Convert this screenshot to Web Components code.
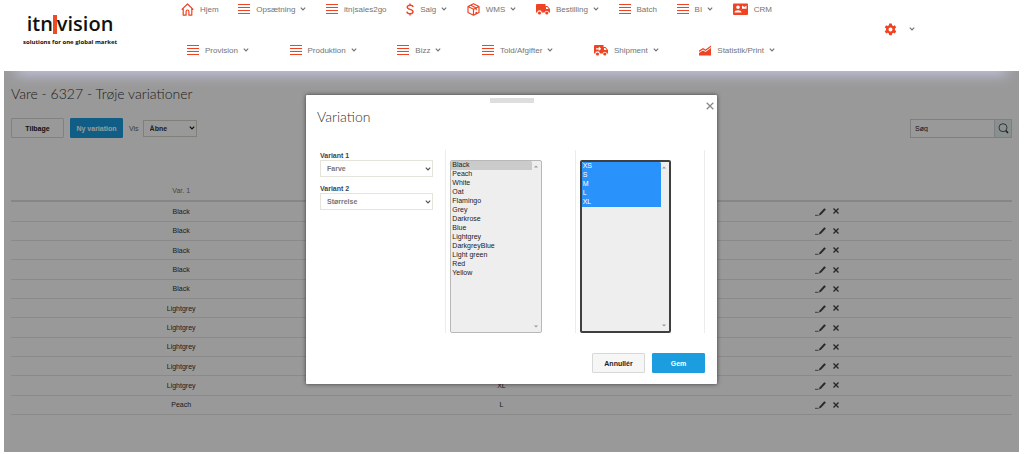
<!DOCTYPE html>
<html lang="da">
<head>
<meta charset="utf-8">
<title>Vare - Trøje variationer</title>
<style>
html { height: 100%; }
body { margin: 0; min-height: 100%; display: flex; flex-direction: column; background: #fff; font-family: "Liberation Sans", Arial, sans-serif; font-size: 7px; color: #333; }
</style>
</head>
<body>
<app-header></app-header>
<variation-page></variation-page>
<script>
const ICONS = {
  menu: [12, 12, '<path d="M0 1.5h12M0 4.5h12M0 7.5h12M0 10.5h12" stroke="currentColor" stroke-width="1.2"/>'],
  home: [13, 13, '<path d="M.7 6.6 6.5 1l5.8 5.6M2.2 5.6v6.6h2.9V8.4a1.4 1.4 0 0 1 2.8 0v3.8h2.9V5.6" fill="none" stroke="currentColor" stroke-width="1.2" stroke-linejoin="round"/>'],
  dollar: [8, 13, '<path d="M7 4C6.800 2.700 5.700 2.200 4 2.200S1.200 3 1.200 4.300C1.200 7 7 5.700 7 8.700c0 1.400-1.200 2.100-3 2.100S1.100 10.100.9 8.700M4 .4v2M4 10.500v2.100" fill="none" stroke="currentColor" stroke-width="1.400"/>'],
  box: [13, 13, '<path d="M6.500.8 12 3.500v6L6.500 12.300 1 9.500v-6zM1 3.500l5.500 2.800L12 3.500M6.500 6.300v6M3.700 2.200l5.500 2.800v2.300M8.200 10.200l2-1" fill="none" stroke="currentColor" stroke-width="1.200" stroke-linejoin="round"/>'],
  truck: [14, 12, '<path d="M1 1h8.500v2H11.500l2.500 3v3.500h-1a2.300 2.300 0 0 0-4.400 0H5.800a2.300 2.300 0 0 0-4.600 0H0V2a1 1 0 0 1 1-1zm9 3v2h2.700L11.200 4z" fill="currentColor" fill-rule="evenodd"/><circle cx="3.500" cy="10" r="1.600" fill="currentColor"/><circle cx="10.800" cy="10" r="1.600" fill="currentColor"/>'],
  ship: [14, 12, '<path d="M1 1h8.500v2H11.500l2.500 3v3.500h-1a2.300 2.300 0 0 0-4.400 0H5.800a2.300 2.300 0 0 0-4.600 0H0V2a1 1 0 0 1 1-1zm9 3v2h2.700L11.200 4zM2 4.200v1.200h2.800V7l2.400-2.300-2.400-2.200v1.700z" fill="currentColor" fill-rule="evenodd"/><circle cx="3.500" cy="10" r="1.600" fill="currentColor"/><circle cx="10.800" cy="10" r="1.600" fill="currentColor"/>'],
  card: [15, 13, '<path d="M1 .5h13a1 1 0 0 1 1 1v9.500a1 1 0 0 1-1 1H1a1 1 0 0 1-1-1V1.500a1 1 0 0 1 1-1zM5 2.500a1.800 1.800 0 1 0 0 3.600 1.800 1.800 0 0 0 0-3.600zM1.500 9.500h7c0-3-7-3-7 0zM9 2.500v3.300h4.500V2.500l-2.200 1.600z" fill="currentColor" fill-rule="evenodd"/>'],
  chart: [12, 12, '<path d="M0 6.500 4 4l2.500 1.500L12 1.500v1.400L6.500 7 4 5.400 0 8zM0 9l4-2.600L6.500 8 12 4v7.500H0z" fill="currentColor"/>'],
  gear: [13, 13, '<path d="M5.200.5h2.600l.3 1.700 1.200.7 1.600-.6 1.300 2.200-1.300 1.100v1.500l1.300 1.100-1.300 2.200-1.600-.6-1.200.7-.3 1.700H5.200l-.3-1.700-1.200-.7-1.600.6L.8 8.200l1.300-1.100V5.600L.8 4.500l1.300-2.200 1.600.6 1.200-.7zM6.500 4.400a2 2 0 1 0 0 4 2 2 0 0 0 0-4z" fill="currentColor" fill-rule="evenodd"/>'],
  chevron: [6, 6, '<path d="M.8 1.700 3 3.900l2.200-2.200" fill="none" stroke="currentColor" stroke-width="1.200"/>'],
  search: [11, 11, '<circle cx="5" cy="4.700" r="4" fill="none" stroke="currentColor" stroke-width=".8"/><path d="m8 7.800 2 2.200" stroke="currentColor" stroke-width="1.600"/>'],
  edit: [12, 9, '<path d="M0 8.300h3.600" stroke="currentColor" stroke-width=".8"/><path d="m4 8.500.5-2L9.300 1.200l1.600 1.400L6 7.800z" fill="currentColor"/>'],
  cross: [6, 6, '<path d="m.5.500 5 5M5.500.500.500 5.500" stroke="currentColor" stroke-width="1.400"/>'],
  close: [8, 8, '<path d="m.7.700 6.600 6.600M7.300.700.700 7.300" stroke="currentColor" stroke-width="1.300"/>'],
  up: [4, 3, '<path d="M0 2.500 2 .5l2 2z" fill="currentColor"/>'],
  down: [4, 3, '<path d="M0 .5 2 2.500l2-2z" fill="currentColor"/>']
};

class ElementBase extends HTMLElement {
  connectedCallback() {
    if (this.shadowRoot) return;
    this.attachShadow({ mode: "open" }).innerHTML = this.render();
  }
}

customElements.define("app-icon", class extends ElementBase {
  render() {
    const [w, h, body] = ICONS[this.getAttribute("name")];
    return `<style>:host{display:inline-block;flex:none}svg{display:block}</style>
      <svg width="${w}" height="${h}" viewBox="0 0 ${w} ${h}" aria-hidden="true">${body}</svg>`;
  }
});

customElements.define("nav-item", class extends ElementBase {
  render() {
    return `<style>
      :host{display:block}
      a{display:flex;align-items:center;height:18px;color:#747474;text-decoration:none;font-size:8px;white-space:nowrap}
      .lead{color:#ee4423;margin-right:6px}
      .more{margin-left:5px}
    </style>
    <a href="#"><app-icon class="lead" name="${this.getAttribute("icon")}"></app-icon><slot></slot>${
      this.hasAttribute("more") ? '<app-icon class="more" name="chevron"></app-icon>' : ""}</a>`;
  }
});

customElements.define("brand-logo", class extends ElementBase {
  render() {
    return `<style>
      :host{display:block;text-align:center;color:#111;font-family:"Open Sans","Noto Sans",sans-serif}
      a{color:inherit;text-decoration:none;display:block}
      .name{display:flex;justify-content:center;align-items:center;font-size:20px;line-height:28px;font-weight:600}
      .bar{width:4px;height:19px;background:#ee4b22}
      .tag{display:block;font-size:6px;line-height:8px;font-weight:700;white-space:nowrap}
    </style>
    <a href="#"><span class="name"><span>itn</span><span class="bar"></span><span>vision</span></span>
    <span class="tag">solutions for one global market</span></a>`;
  }
});

customElements.define("app-header", class extends ElementBase {
  render() {
    return `<style>
      :host{display:block}
      header{display:grid;grid-template-columns:181px minmax(0,1fr) 249px;height:71px;background:#fff}
      brand-logo{justify-self:start;width:94px;margin:10px 0 0 23px}
      nav{display:flex;flex-direction:column;gap:23px}
      .row{display:flex;justify-content:space-between}
      .first{padding-right:3px}
      .second{padding-left:6px}
      button{display:flex;align-items:center;gap:12px;margin:22px 0 0 109px;padding:0;border:0;background:none;color:#747474;height:14px}
      .gear{color:#ee4423}
    </style>
    <header>
      <brand-logo></brand-logo>
      <nav aria-label="Hovedmenu">
        <div class="row first">
          <nav-item icon="home">Hjem</nav-item>
          <nav-item icon="menu" more>Opsætning</nav-item>
          <nav-item icon="menu">itn|sales2go</nav-item>
          <nav-item icon="dollar" more>Salg</nav-item>
          <nav-item icon="box" more>WMS</nav-item>
          <nav-item icon="truck" more>Bestilling</nav-item>
          <nav-item icon="menu">Batch</nav-item>
          <nav-item icon="menu" more>BI</nav-item>
          <nav-item icon="card">CRM</nav-item>
        </div>
        <div class="row second">
          <nav-item icon="menu" more>Provision</nav-item>
          <nav-item icon="menu" more>Produktion</nav-item>
          <nav-item icon="menu" more>Bizz</nav-item>
          <nav-item icon="menu" more>Told/Afgifter</nav-item>
          <nav-item icon="ship" more>Shipment</nav-item>
          <nav-item icon="chart" more>Statistik/Print</nav-item>
        </div>
      </nav>
      <div><button type="button" aria-label="Indstillinger"><app-icon class="gear" name="gear"></app-icon><app-icon name="chevron"></app-icon></button></div>
    </header>`;
  }
});

customElements.define("ui-button", class extends ElementBase {
  render() {
    return `<style>
      :host{display:block}
      button{box-sizing:border-box;width:53px;height:20px;padding:0;border:1px solid #d8d8d8;border-radius:1px;background:#f6f6f6;color:#222;font:bold 7px "Liberation Sans",Arial,sans-serif;white-space:nowrap}
      :host([primary]) button{background:#1b9ddf;border-color:#1b9ddf;color:#fff}
      :host([flat]) button{background:#fff}
    </style><button type="button"><slot></slot></button>`;
  }
});

customElements.define("drop-down", class extends ElementBase {
  render() {
    const label = this.getAttribute("label");
    return `<style>
      :host{display:block}
      .field{display:flex;flex-direction:column}
      label{font-size:7px;line-height:9px;font-weight:bold;color:#3c4650}
      .control{display:grid;align-items:center;color:#555}
      select,app-icon{grid-area:1/1}
      select{appearance:none;box-sizing:border-box;width:100%;height:17px;padding:0 6px;border:1px solid #e4e4da;border-radius:0;background:#fff;color:#777;font:bold 7px "Liberation Sans",Arial,sans-serif}
      app-icon{justify-self:end;margin-right:2px;pointer-events:none}
      :host([inline]) .field{flex-direction:row;align-items:center;gap:4px}
      :host([inline]) label{font-weight:normal;color:#666}
      :host([inline]) .control{width:54px;color:#111}
      :host([inline]) select{color:#333;border-color:#d6d6c8}
    </style>
    <div class="field"><label for="s">${label}</label>
      <div class="control"><select id="s"><option>${this.getAttribute("value")}</option></select><app-icon name="chevron"></app-icon></div>
    </div>`;
  }
});

customElements.define("list-box", class extends ElementBase {
  render() {
    const chosen = (this.getAttribute("selected") || "").split(",");
    const options = this.getAttribute("options").split(",")
      .map(o => `<option${chosen.includes(o) ? " selected" : ""}>${o}</option>`).join("");
    return `<style>
      :host{display:block;--mark:#cbcbcb;--mark-text:#222;--edge:#b8b8b8}
      :host([active]){--mark:#2a92fb;--mark-text:#fff;--edge:#3f3f3f}
      .frame{position:relative;box-sizing:border-box;height:173px;border:1px solid var(--edge);border-radius:2px;background:#eee;padding-right:9px}
      :host([active]) .frame{border-width:2px;padding-right:8px}
      select{display:block;box-sizing:border-box;width:100%;height:100%;margin:0;padding:0;border:0;outline:0;background:#eee;overflow:hidden;scrollbar-width:none;font:7px "Liberation Sans",Arial,sans-serif;color:#222}
      option{box-sizing:border-box;height:9px;min-height:9px;line-height:9px;padding:0 1px;color:#222}
      option:checked{background:var(--mark) linear-gradient(var(--mark),var(--mark));color:var(--mark-text);-webkit-text-fill-color:var(--mark-text)}
      app-icon{position:absolute;right:3px;color:#999}
      .up{top:4px}.down{bottom:4px}
    </style>
    <div class="frame"><select multiple aria-label="${this.getAttribute("label")}">${options}</select>
      <app-icon class="up" name="up"></app-icon><app-icon class="down" name="down"></app-icon></div>`;
  }
});

customElements.define("modal-dialog", class extends ElementBase {
  render() {
    return `<style>
      :host{position:absolute;inset:0;overflow:hidden;display:flex;justify-content:center;align-items:flex-start;background:rgba(0,0,0,.4)}
      :host::before{content:"";position:absolute;top:-10px;left:14px;right:14px;height:10px;box-shadow:0 1px 14px 2px #c8c8e8}
      section{position:relative;box-sizing:border-box;width:411px;max-width:96%;margin-top:24px;padding:13px 12px 11px 11px;background:#fff;border-radius:1px;box-shadow:0 0 4px rgba(0,0,0,.6)}
      .grip{position:absolute;top:3px;left:50%;width:44px;height:5px;margin-left:-22px;background:#dedede}
      .close{position:absolute;top:3px;right:3px;padding:0;border:0;background:none;color:#8a8a8a}
      h2{margin:0 0 24px;font:300 14px/18px Lato,"Open Sans",sans-serif;color:#333}
      footer{display:flex;justify-content:flex-end;gap:7px;margin-top:20px}
    </style>
    <section role="dialog" aria-label="Variation">
      <div class="grip"></div>
      <button class="close" type="button" aria-label="Luk"><app-icon name="close"></app-icon></button>
      <h2><slot name="title"></slot></h2>
      <slot></slot>
      <footer><slot name="actions"></slot></footer>
    </section>`;
  }
});

customElements.define("variation-table", class extends ElementBase {
  render() {
    const rows = [["Black"], ["Black"], ["Black"], ["Black"], ["Black"], ["Lightgrey"], ["Lightgrey"], ["Lightgrey"], ["Lightgrey"], ["Lightgrey", "XL"], ["Peach", "L"]];
    return `<style>
      :host{display:block}
      table{width:100%;height:234px;table-layout:fixed;border-collapse:collapse;font-size:7px;text-align:center;color:#333}
      th,td{padding:0;line-height:9px;border-bottom:1px solid #e6e6e6}
      th{height:19px;font-weight:normal;color:#777;border-bottom:2px solid #e0e0e0}
      .a{width:34%}.b{width:30%}.c{width:35%}
      .tools{display:flex;justify-content:center;gap:6px;align-items:center}
      button{padding:0;border:0;background:none;color:#444}
      button app-icon{display:block}
    </style>
    <table>
      <colgroup><col class="a"><col class="b"><col class="c"><col></colgroup>
      <thead><tr><th>Var. 1</th><th></th><th></th><th></th></tr></thead>
      <tbody>${rows.map(([a, b = ""]) => `<tr><td>${a}</td><td>${b}</td><td><div class="tools"><button type="button" aria-label="Rediger"><app-icon name="edit"></app-icon></button><button type="button" aria-label="Slet"><app-icon name="cross"></app-icon></button></div></td><td></td></tr>`).join("")}</tbody>
    </table>`;
  }
});

customElements.define("search-box", class extends ElementBase {
  render() {
    return `<style>
      :host{display:block}
      form{display:flex;box-sizing:border-box;width:102px;height:19px;border:1px solid #d2d6d6}
      input{flex:1;min-width:0;box-sizing:border-box;padding:0 4px;border:0;background:#fff;font:7px "Liberation Sans",Arial,sans-serif}
      input::placeholder{color:#222;opacity:1}
      button{width:17px;padding:0;display:grid;place-items:center;border:0;border-left:1px solid #d2d6d6;background:#e6eeee;color:#333}
    </style>
    <form role="search"><input type="text" aria-label="Søg" placeholder="Søg"><button type="button" aria-label="Start søgning"><app-icon name="search"></app-icon></button></form>`;
  }
});

customElements.define("variation-page", class extends ElementBase {
  render() {
    return `<style>
      :host{display:block;flex:1;position:relative;margin:0 5px 2px 4px}
      main{padding:13px 7px 36px}
      h1{margin:0;font:300 14px/20px Lato,"Open Sans",sans-serif;color:#333}
      .bar{display:flex;align-items:center;gap:6px;margin:14px 0 43px}
      search-box{margin-left:auto}
      .columns{display:grid;grid-template-columns:repeat(3,minmax(0,1fr));height:183px}
      .columns>div{border-right:1px solid #ececec}
      .fields{display:flex;flex-direction:column;gap:7px;padding:1px 12px 0 3px}
      .list{padding:10px 33px 0 4px}
    </style>
    <main>
      <h1>Vare - 6327 - Trøje variationer</h1>
      <div class="bar">
        <ui-button flat>Tilbage</ui-button><ui-button primary>Ny variation</ui-button>
        <drop-down inline label="Vis" value="Åbne"></drop-down>
        <search-box></search-box>
      </div>
      <variation-table></variation-table>
    </main>
    <modal-dialog>
      <span slot="title">Variation</span>
      <div class="columns">
        <div class="fields"><drop-down label="Variant 1" value="Farve"></drop-down><drop-down label="Variant 2" value="Størrelse"></drop-down></div>
        <div class="list"><list-box label="Farve" selected="Black" options="Black,Peach,White,Oat,Flamingo,Grey,Darkrose,Blue,Lightgrey,DarkgreyBlue,Light green,Red,Yellow"></list-box></div>
        <div class="list"><list-box active label="Størrelse" selected="XS,S,M,L,XL" options="XS,S,M,L,XL"></list-box></div>
      </div>
      <ui-button slot="actions">Annullér</ui-button><ui-button slot="actions" primary>Gem</ui-button>
    </modal-dialog>`;
  }
});
</script>
</body>
</html>
